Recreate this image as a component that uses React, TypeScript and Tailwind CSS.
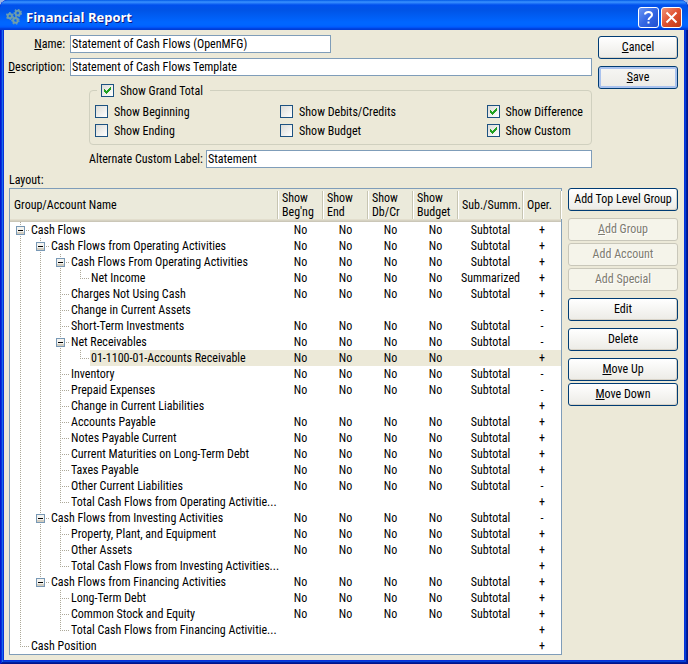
import React, { useState } from "react";

type Row = {
  name: string;
  depth: number;
  cols?: "all" | "flags";
  sub?: string;
  oper: string;
  selected?: boolean;
};

const ROWS: Row[] = [
  { name: "Cash Flows", depth: 0, cols: "all", sub: "Subtotal", oper: "+" },
  { name: "Cash Flows from Operating Activities", depth: 1, cols: "all", sub: "Subtotal", oper: "+" },
  { name: "Cash Flows From Operating Activities", depth: 2, cols: "all", sub: "Subtotal", oper: "+" },
  { name: "Net Income", depth: 3, cols: "all", sub: "Summarized", oper: "+" },
  { name: "Charges Not Using Cash", depth: 2, cols: "all", sub: "Subtotal", oper: "+" },
  { name: "Change in Current Assets", depth: 2, oper: "-" },
  { name: "Short-Term Investments", depth: 2, cols: "all", sub: "Subtotal", oper: "-" },
  { name: "Net Receivables", depth: 2, cols: "all", sub: "Subtotal", oper: "-" },
  { name: "01-1100-01-Accounts Receivable", depth: 3, cols: "flags", oper: "+", selected: true },
  { name: "Inventory", depth: 2, cols: "all", sub: "Subtotal", oper: "-" },
  { name: "Prepaid Expenses", depth: 2, cols: "all", sub: "Subtotal", oper: "-" },
  { name: "Change in Current Liabilities", depth: 2, oper: "+" },
  { name: "Accounts Payable", depth: 2, cols: "all", sub: "Subtotal", oper: "+" },
  { name: "Notes Payable Current", depth: 2, cols: "all", sub: "Subtotal", oper: "+" },
  { name: "Current Maturities on Long-Term Debt", depth: 2, cols: "all", sub: "Subtotal", oper: "+" },
  { name: "Taxes Payable", depth: 2, cols: "all", sub: "Subtotal", oper: "+" },
  { name: "Other Current Liabilities", depth: 2, cols: "all", sub: "Subtotal", oper: "-" },
  { name: "Total Cash Flows from Operating Activitie...", depth: 2, oper: "+" },
  { name: "Cash Flows from Investing Activities", depth: 1, cols: "all", sub: "Subtotal", oper: "-" },
  { name: "Property, Plant, and Equipment", depth: 2, cols: "all", sub: "Subtotal", oper: "+" },
  { name: "Other Assets", depth: 2, cols: "all", sub: "Subtotal", oper: "+" },
  { name: "Total Cash Flows from Investing Activities...", depth: 2, oper: "+" },
  { name: "Cash Flows from Financing Activities", depth: 1, cols: "all", sub: "Subtotal", oper: "+" },
  { name: "Long-Term Debt", depth: 2, cols: "all", sub: "Subtotal", oper: "+" },
  { name: "Common Stock and Equity", depth: 2, cols: "all", sub: "Subtotal", oper: "+" },
  { name: "Total Cash Flows from Financing Activitie...", depth: 2, oper: "+" },
  { name: "Cash Position", depth: 0, oper: "+" },
];

const HEADINGS = ["Show\nBeg'ng", "Show\nEnd", "Show\nDb/Cr", "Show\nBudget", "Sub./Summ.", "Oper."];

/* True when another row of the given level follows before the branch closes. */
function continues(index: number, level: number) {
  for (let i = index + 1; i < ROWS.length; i++) {
    if (ROWS[i].depth < level) return false;
    if (ROWS[i].depth === level) return true;
  }
  return false;
}

function Guide({ index, level }: { index: number; level: number }) {
  const own = ROWS[index].depth === level;
  const below = continues(index, level);
  const expanded = own && ROWS[index + 1] !== undefined && ROWS[index + 1].depth > level;
  return (
    <svg width="20" height="16" className="shrink-0" shapeRendering="crispEdges" aria-hidden="true">
      {(own || below) && (
        <path d={below ? "M10.5 0V16" : "M10.5 0V9"} stroke="#aca899" strokeDasharray="1 1" />
      )}
      {own && <path d="M10 8.5H19" stroke="#aca899" strokeDasharray="1 1" />}
      {expanded && (
        <>
          <rect x="6" y="4" width="9" height="9" fill="#7898b5" />
          <rect x="7" y="5" width="7" height="7" fill="#f4f3ef" />
          <rect x="7" y="10" width="7" height="2" fill="#d2cdc0" />
          <rect x="8" y="8" width="5" height="1" fill="#000000" />
        </>
      )}
    </svg>
  );
}

function Check({ label, on = false }: { label: string; on?: boolean }) {
  const [checked, setChecked] = useState(on);
  return (
    <label className="flex h-[13px] items-center gap-1.5 whitespace-nowrap">
      <span className="grid size-[13px] shrink-0">
        <input
          type="checkbox"
          checked={checked}
          onChange={(e) => setChecked(e.target.checked)}
          className="peer col-start-1 row-start-1 size-[13px] appearance-none border border-[#1d5281] bg-linear-to-br from-[#dcdcd7] to-white"
        />
        <svg
          viewBox="0 0 13 13"
          className="pointer-events-none invisible col-start-1 row-start-1 size-[13px] peer-checked:visible"
          shapeRendering="crispEdges"
          aria-hidden="true"
        >
          <path
            fill="#21a121"
            d="M3 5h1v3h-1zM4 6h1v3h-1zM5 7h1v3h-1zM6 6h1v3h-1zM7 5h1v3h-1zM8 4h1v3h-1zM9 3h1v3h-1z"
          />
        </svg>
      </span>
      {label}
    </label>
  );
}

function Btn({
  children,
  disabled,
  primary,
}: {
  children: React.ReactNode;
  disabled?: boolean;
  primary?: boolean;
}) {
  const look = disabled
    ? "border-[#c9c7ba] bg-[#f5f4ea] text-[#7d7b70] [text-shadow:1px_1px_0_#fff]"
    : primary
      ? "border-[#003c74] bg-linear-to-b from-[#f6f6f4] to-[#ecebe6] shadow-[inset_0_0_0_2px_#a9c2ee]"
      : "border-[#003c74] bg-linear-to-b from-white to-[#ecebe6] shadow-[inset_-1px_-1px_0_#d8d3c8]";
  return (
    <button
      type="button"
      disabled={disabled}
      className={`h-[23px] w-full rounded-[3px] border text-center leading-[21px] whitespace-nowrap ${look}`}
    >
      {children}
    </button>
  );
}

const FIELD = "h-[18px] min-w-0 border border-[#7f9db9] bg-white px-px outline-none";

export default function App() {
  return (
    <div className="bg-[#9db4e4] font-['Roboto_Condensed','Roboto',sans-serif] text-[12px] leading-[14px] text-black">
      <div className="flex min-h-screen flex-col rounded-t-lg bg-[#0831d9] px-1 pb-1 shadow-[inset_1px_0_0_#0019cf,inset_-1px_-1px_0_#00138c,inset_2px_0_0_#0831d9,inset_-2px_-2px_0_#001ea0,inset_3px_0_0_#166aee,inset_-3px_-3px_0_#0441d8]">
        <header className="-mx-1 flex h-[30px] items-center rounded-t-lg bg-[linear-gradient(#0058e6_0,#3a93ff_2px,#0050ee_5px,#0054e6_10px,#0066ff_22px,#0066ff_25px,#005bff_27px,#003dd7_29px,#003dd7_30px)] pt-1 pr-1.5 pl-1.5">
          <svg width="16" height="16" viewBox="0 0 16 16" fill="none" aria-hidden="true">
            <g stroke="#5b93c4" strokeWidth="3.4" strokeDasharray="1.2 1.2">
              <circle cx="3.8" cy="7" r="2.4" />
              <circle cx="11.8" cy="4" r="2.6" />
              <circle cx="9.4" cy="11.4" r="2.6" />
            </g>
            <g stroke="#6f9fa8" strokeWidth="1.8">
              <circle cx="3.8" cy="7" r="2.2" />
              <circle cx="11.8" cy="4" r="2.4" />
              <circle cx="9.4" cy="11.4" r="2.4" />
            </g>
          </svg>
          <h1 className="ml-1 flex-1 font-['Open_Sans','Noto_Sans',sans-serif] text-[13px] leading-[18px] font-bold text-white [text-shadow:1px_1px_0_#0a1883]">
            Financial Report
          </h1>
          <div className="flex gap-0.5">
            <button
              type="button"
              aria-label="Help"
              className="grid size-[21px] place-items-center rounded-[3px] border border-white bg-linear-to-br from-[#6b95f2] via-[#3567e4] to-[#1f4fd0]"
            >
              <svg width="19" height="19" fill="none" stroke="#fff" strokeWidth="2" aria-hidden="true">
                <path d="M6 6.500C6 4.500 7.500 4 9.500 4S13 5 13 7c0 2-3.500 2.500-3.500 5M9.500 13.500v2" />
              </svg>
            </button>
            <button
              type="button"
              aria-label="Close"
              className="grid size-[21px] place-items-center rounded-[3px] border border-white bg-linear-to-br from-[#ee9277] via-[#e0502f] to-[#c13a14]"
            >
              <svg width="19" height="19" stroke="#fff" strokeWidth="2" aria-hidden="true">
                <path d="M4.500 4.500l10 10M14.500 4.500l-10 10" />
              </svg>
            </button>
          </div>
        </header>

        <main className="flex flex-1 flex-col bg-[#ece9d8] pt-[5px] pr-1.5 pb-[5px]">
          <div className="flex gap-1.5">
            <form className="flex min-w-0 flex-1 flex-col" onSubmit={(e) => e.preventDefault()}>
              <div className="flex items-center">
                <label htmlFor="name" className="w-[66px] pr-[5px] text-right">
                  <u>N</u>ame:
                </label>
                <div className="flex flex-1">
                  <input id="name" className={`${FIELD} w-1/2`} defaultValue="Statement of Cash Flows (OpenMFG)" />
                </div>
              </div>
              <div className="mt-[5px] flex items-center">
                <label htmlFor="description" className="w-[66px] pr-[5px] text-right">
                  <u>D</u>escription:
                </label>
                <input id="description" className={`${FIELD} flex-1`} defaultValue="Statement of Cash Flows Template" />
              </div>
              <fieldset className="mt-2 ml-[85px] min-w-0 rounded-[4px] border border-[#d0d0bf]">
                <legend className="ml-[7px] h-[13px] pr-[7px] pl-1">
                  <Check label="Show Grand Total" on />
                </legend>
                <div className="grid grid-cols-[auto_auto_auto] justify-between gap-y-1.5 pt-2 pr-2 pb-[7px] pl-[5px]">
                  <Check label="Show Beginning" />
                  <Check label="Show Debits/Credits" />
                  <Check label="Show Difference" on />
                  <Check label="Show Ending" />
                  <Check label="Show Budget" />
                  <Check label="Show Custom" on />
                </div>
              </fieldset>
              <div className="mt-[5px] ml-[85px] flex items-center">
                <label htmlFor="alternate" className="w-[117px] whitespace-nowrap">
                  Alternate Custom Label:
                </label>
                <input id="alternate" className={`${FIELD} flex-1`} defaultValue="Statement" />
              </div>
            </form>
            <div className="flex w-20 shrink-0 flex-col gap-[7px] pt-px">
              <Btn>
                <u>C</u>ancel
              </Btn>
              <Btn primary>
                <u>S</u>ave
              </Btn>
            </div>
          </div>

          <h2 id="layout" className="mt-[5px] h-[15px] pl-[5px]">
            Layout:
          </h2>
          <div className="flex flex-1 gap-1.5 pl-[5px]">
            <div className="min-w-0 flex-1 border border-[#7f9db9] bg-white">
              <table aria-labelledby="layout" className="w-full table-fixed border-collapse">
                <colgroup>
                  <col />
                  <col className="w-[45px]" />
                  <col className="w-[45px]" />
                  <col className="w-[45px]" />
                  <col className="w-[45px]" />
                  <col className="w-[65px]" />
                  <col className="w-[38px]" />
                </colgroup>
                <thead>
                  <tr className="h-[33px] bg-[#ebeadb] bg-[linear-gradient(#ebeadb_30px,#e2decd_30px,#e2decd_31px,#d6d2c2_31px,#d6d2c2_32px,#cbc7b8_32px)] text-left">
                    {["Group/Account Name", ...HEADINGS].map((h) => (
                      <th key={h} scope="col" className="p-0 pt-0.5 pb-[3px] font-normal">
                        <div className="flex h-[28px] items-center border-r border-[#c7c5b2] pl-1 whitespace-pre shadow-[1px_0_0_#fff]">
                          {h}
                        </div>
                      </th>
                    ))}
                  </tr>
                </thead>
                <tbody>
                  {ROWS.map((r, i) => {
                    const bg = r.selected ? "bg-[#ece9d8]" : "";
                    return (
                      <tr key={i} className="h-4 text-center">
                        <td className="p-0">
                          <div className="flex h-4 items-center text-left">
                            {Array.from({ length: r.depth + 1 }, (_, level) => (
                              <Guide key={level} index={i} level={level} />
                            ))}
                            <span className={`h-4 flex-1 pl-px leading-4 whitespace-nowrap ${bg}`}>{r.name}</span>
                          </div>
                        </td>
                        {[0, 1, 2, 3].map((c) => (
                          <td key={c} className={`p-0 leading-4 ${bg}`}>
                            {r.cols ? "No" : ""}
                          </td>
                        ))}
                        <td className={`p-0 leading-4 ${bg}`}>{r.sub}</td>
                        <td className={`p-0 leading-4 ${bg}`}>{r.oper}</td>
                      </tr>
                    );
                  })}
                </tbody>
              </table>
            </div>
            <div className="flex w-[110px] shrink-0 flex-col gap-[7px]">
              <Btn>Add Top Level Group</Btn>
              <div className="flex flex-col gap-0.5">
                <Btn disabled>
                  <u>A</u>dd Group
                </Btn>
                <Btn disabled>Add Account</Btn>
                <Btn disabled>Add Special</Btn>
              </div>
              <Btn>Edit</Btn>
              <Btn>Delete</Btn>
              <div className="flex flex-col gap-0.5">
                <Btn>
                  <u>M</u>ove Up
                </Btn>
                <Btn>
                  <u>M</u>ove Down
                </Btn>
              </div>
            </div>
          </div>
        </main>
      </div>
    </div>
  );
}
